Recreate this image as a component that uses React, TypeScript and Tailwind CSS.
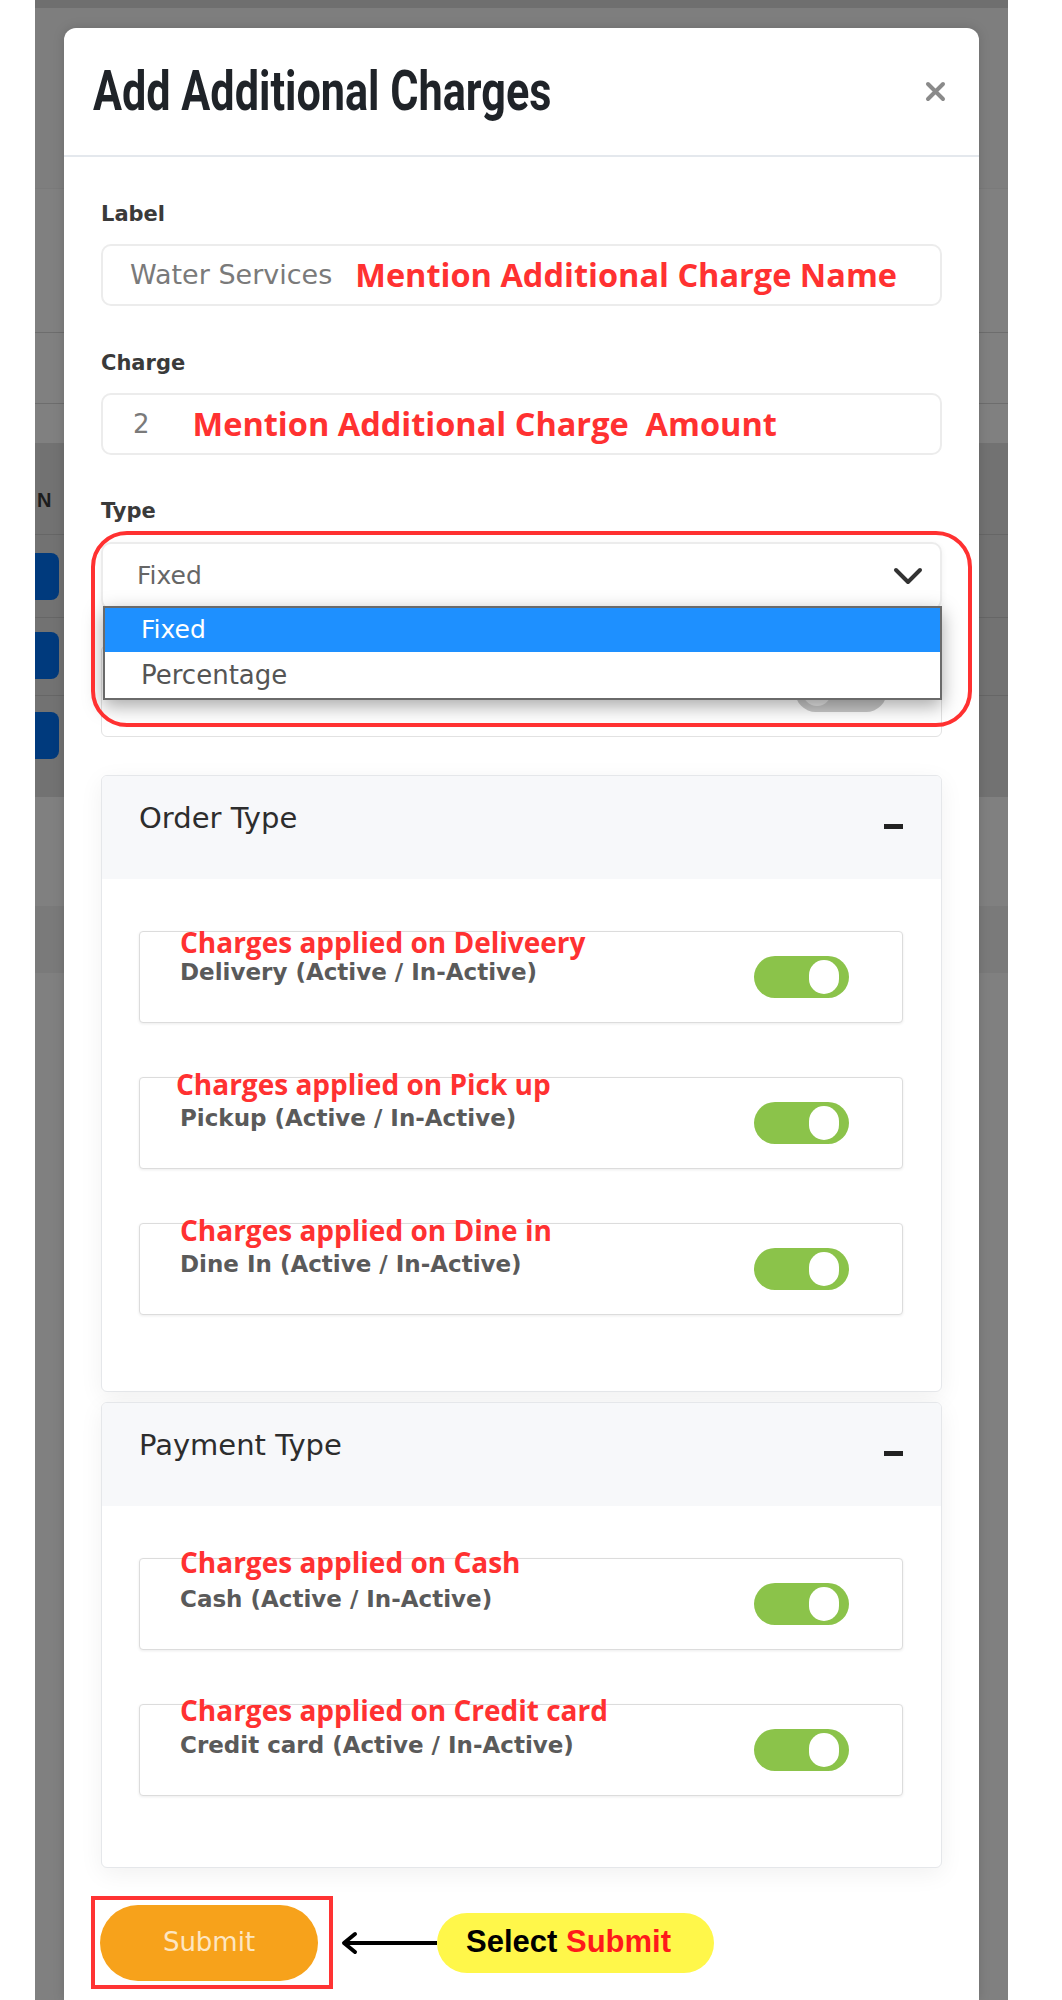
import React from "react";

const ui = "font-['DejaVu_Sans',sans-serif]";
const note = "font-['Open_Sans',sans-serif] font-bold text-[#ff3131]";

function Toggle({ on = true }: { on?: boolean }) {
  if (on) {
    return (
      <div className="flex h-[42px] w-[95px] shrink-0 items-center justify-end rounded-full bg-[#8bc34a] pr-[10px]">
        <div className="h-[34px] w-[30px] rounded-full bg-white" />
      </div>
    );
  }
  return (
    <div className="flex h-[42px] w-[92px] shrink-0 items-center justify-start rounded-full bg-[#c9c9c9] pl-[8px]">
      <div className="h-[30px] w-[28px] rounded-full bg-[#e6e6e6]" />
    </div>
  );
}

function OptionRow({
  hint,
  label,
  hintPos,
}: {
  hint: string;
  label: string;
  hintPos: string;
}) {
  return (
    <div className="relative flex h-[92px] items-center justify-between rounded-[4px] border border-[#dcdcdc] bg-white pl-[40px] pr-[53px] shadow-[0_1px_3px_rgba(0,0,0,0.08)]">
      <span className={`absolute whitespace-nowrap text-[28px] leading-[32px] ${hintPos} ${note}`}>
        {hint}
      </span>
      <span className={`${ui} -mt-[10px] whitespace-nowrap text-[23px] font-bold leading-[28px] text-[#5a5a5a]`}>
        {label}
      </span>
      <Toggle />
    </div>
  );
}

function Card({
  title,
  bottom,
  children,
}: {
  title: string;
  bottom: string;
  children: React.ReactNode;
}) {
  return (
    <div className="overflow-hidden rounded-[6px] border border-[#e5e7ea] bg-white shadow-[0_6px_24px_rgba(0,0,0,0.06)]">
      <div className="flex h-[103px] items-start justify-between bg-[#f7f8fa] pl-[37px] pr-[38px] pt-[25px]">
        <span className={`${ui} text-[29px] leading-[34px] text-[#2d2d2d]`}>{title}</span>
        <span className="mt-[23px] h-[5px] w-[19px] bg-[#222]" />
      </div>
      <div className={`flex flex-col gap-[54px] pl-[37px] pr-[38px] pt-[52px] ${bottom}`}>{children}</div>
    </div>
  );
}

function FieldLabel({ children }: { children: React.ReactNode }) {
  return <div className={`${ui} text-[21px] font-bold leading-[26px] text-[#3a3a3a]`}>{children}</div>;
}

export default function App() {
  return (
    <div className="flex h-[2000px] w-[1062px] overflow-hidden bg-white">
      <div className="w-[35px] shrink-0 bg-white" />

      {/* dimmed page behind the dialog */}
      <div className="relative w-[973px] shrink-0 bg-[#808080]">
        <div className="h-[8px] bg-[#6f6f6f]" />
        <div className="h-[180px] bg-[#7e7e7e]" />
        <div className="h-[144px] border-t border-[#7a7a7a]" />
        <div className="h-[71px] border-t border-[#6d6d6d]" />
        <div className="h-[40px] border-t border-[#6d6d6d]" />
        <div className="h-[354px] bg-[#727272]">
          <div className="flex h-[91px] items-end pb-[22px] pl-[2px]">
            <span className="font-['Liberation_Sans',sans-serif] text-[20px] font-bold leading-[24px] text-[#1c1c1c]">N</span>
          </div>
          <div className="h-[83px] border-t border-[#666] pt-[18px]">
            <div className="h-[47px] w-[24px] rounded-r-[8px] bg-[#003a7d]" />
          </div>
          <div className="h-[78px] border-t border-[#666] pt-[14px]">
            <div className="h-[47px] w-[24px] rounded-r-[8px] bg-[#003a7d]" />
          </div>
          <div className="h-[78px] border-t border-[#666] pt-[16px]">
            <div className="h-[47px] w-[24px] rounded-r-[8px] bg-[#003a7d]" />
          </div>
        </div>
        <div className="h-[109px]" />
        <div className="h-[67px] bg-[#7a7a7a]" />

        {/* dialog */}
        <div className="absolute bottom-0 left-[29px] top-[28px] z-10 w-[915px] rounded-t-[12px] bg-white shadow-[0_0_12px_rgba(0,0,0,0.15)]">
          <div className="flex h-[129px] items-center justify-between border-b-2 border-[#e4e8ed] pl-[29px] pr-[33px]">
            <span className="inline-block origin-left scale-x-[0.785] whitespace-nowrap font-['Roboto',sans-serif] text-[55px] font-bold leading-none text-[#1f2328]">
              Add Additional Charges
            </span>
            <svg width="21" height="21" viewBox="0 0 21 21">
              <path d="M3 3 L18 18 M18 3 L3 18" stroke="#8a8a8a" strokeWidth="4" strokeLinecap="round" />
            </svg>
          </div>

          <div className={`flex flex-col px-[37px] pt-[44px] ${ui}`}>
            <FieldLabel>Label</FieldLabel>
            <div className="mt-[17px] flex h-[62px] items-center rounded-[10px] border-2 border-[#ececec] px-[27px]">
              <span className="text-[27px] text-[#7a7a7a]">Water Services</span>
              <span className={`ml-[23px] whitespace-nowrap text-[32.5px] leading-none ${note}`}>
                Mention Additional Charge Name
              </span>
            </div>

            <div className="mt-[44px]">
              <FieldLabel>Charge</FieldLabel>
            </div>
            <div className="mt-[17px] flex h-[62px] items-center rounded-[10px] border-2 border-[#ececec] pl-[30px]">
              <span className="text-[26px] text-[#7a7a7a]">2</span>
              <span className={`ml-[43px] whitespace-pre text-[32.5px] leading-none ${note}`}>
                {"Mention Additional Charge  Amount"}
              </span>
            </div>

            <div className="mt-[43px]">
              <FieldLabel>Type</FieldLabel>
            </div>
            <div className="relative mt-[18px]">
              <div className="flex h-[68px] items-center justify-between rounded-[10px] border-2 border-[#ececec] pl-[34px] pr-[17px] shadow-[0_2px_6px_rgba(0,0,0,0.06)]">
                <span className="text-[25px] text-[#666]">Fixed</span>
                <svg width="30" height="18" viewBox="0 0 30 18">
                  <polyline points="3,3 15,15 27,3" fill="none" stroke="#333" strokeWidth="4" strokeLinecap="round" strokeLinejoin="round" />
                </svg>
              </div>
              <div className="absolute left-[2px] right-0 top-[64px] z-10 border-2 border-[#6a6a6a] bg-white shadow-[0_6px_18px_rgba(0,0,0,0.35)]">
                <div className="flex h-[44px] items-center bg-[#1e90ff] pl-[36px] text-[25px] text-white">Fixed</div>
                <div className="flex h-[46px] items-center pl-[36px] text-[26px] text-[#555]">Percentage</div>
              </div>
              <div className="pointer-events-none absolute -left-[10px] -right-[30px] -top-[11px] z-20 h-[196px] rounded-[36px] border-4 border-[#ff3131]" />
            </div>

            <div className="mt-[35px] flex h-[92px] items-center justify-end rounded-[6px] border border-[#e2e2e2] pr-[54px]">
              <Toggle on={false} />
            </div>

            <div className="mt-[38px]">
              <Card title="Order Type" bottom="pb-[76px]">
                <OptionRow hint="Charges applied on Deliveery" label="Delivery (Active / In-Active)" hintPos="left-[40px] top-[-6px]" />
                <OptionRow hint="Charges applied on Pick up" label="Pickup (Active / In-Active)" hintPos="left-[36px] top-[-10px]" />
                <OptionRow hint="Charges applied on Dine in" label="Dine In (Active / In-Active)" hintPos="left-[40px] top-[-10px]" />
              </Card>
            </div>

            <div className="mt-[10px]">
              <Card title="Payment Type" bottom="pb-[71px]">
                <OptionRow hint="Charges applied on Cash" label="Cash (Active / In-Active)" hintPos="left-[40px] top-[-13px]" />
                <OptionRow hint="Charges applied on Credit card" label="Credit card (Active / In-Active)" hintPos="left-[40px] top-[-11px]" />
              </Card>
            </div>

            <div className="mt-[28px] flex items-center">
              <div className="-ml-[10px] flex h-[93px] items-center border-4 border-[#ff3333] pl-[5px] pr-[11px]">
                <button className="flex h-[76px] w-[218px] items-center justify-center rounded-full bg-[#f7a21b] text-[26px] text-[#fde6c2]">
                  Submit
                </button>
              </div>
              <svg className="ml-[6px]" width="98" height="24" viewBox="0 0 98 24">
                <line x1="6" y1="12" x2="98" y2="12" stroke="#000" strokeWidth="4" />
                <polyline points="16,3 5,12 16,21" fill="none" stroke="#000" strokeWidth="4" strokeLinecap="round" strokeLinejoin="round" />
              </svg>
              <div className="flex h-[60px] w-[277px] items-center rounded-full bg-[#fff74a] pl-[29px] font-['Liberation_Sans',Arial,sans-serif] text-[31px] font-bold text-black">
                Select&nbsp;<span className="text-[#ff1a1a]">Submit</span>
              </div>
            </div>
          </div>
        </div>
      </div>

      <div className="flex-1 bg-white" />
    </div>
  );
}
